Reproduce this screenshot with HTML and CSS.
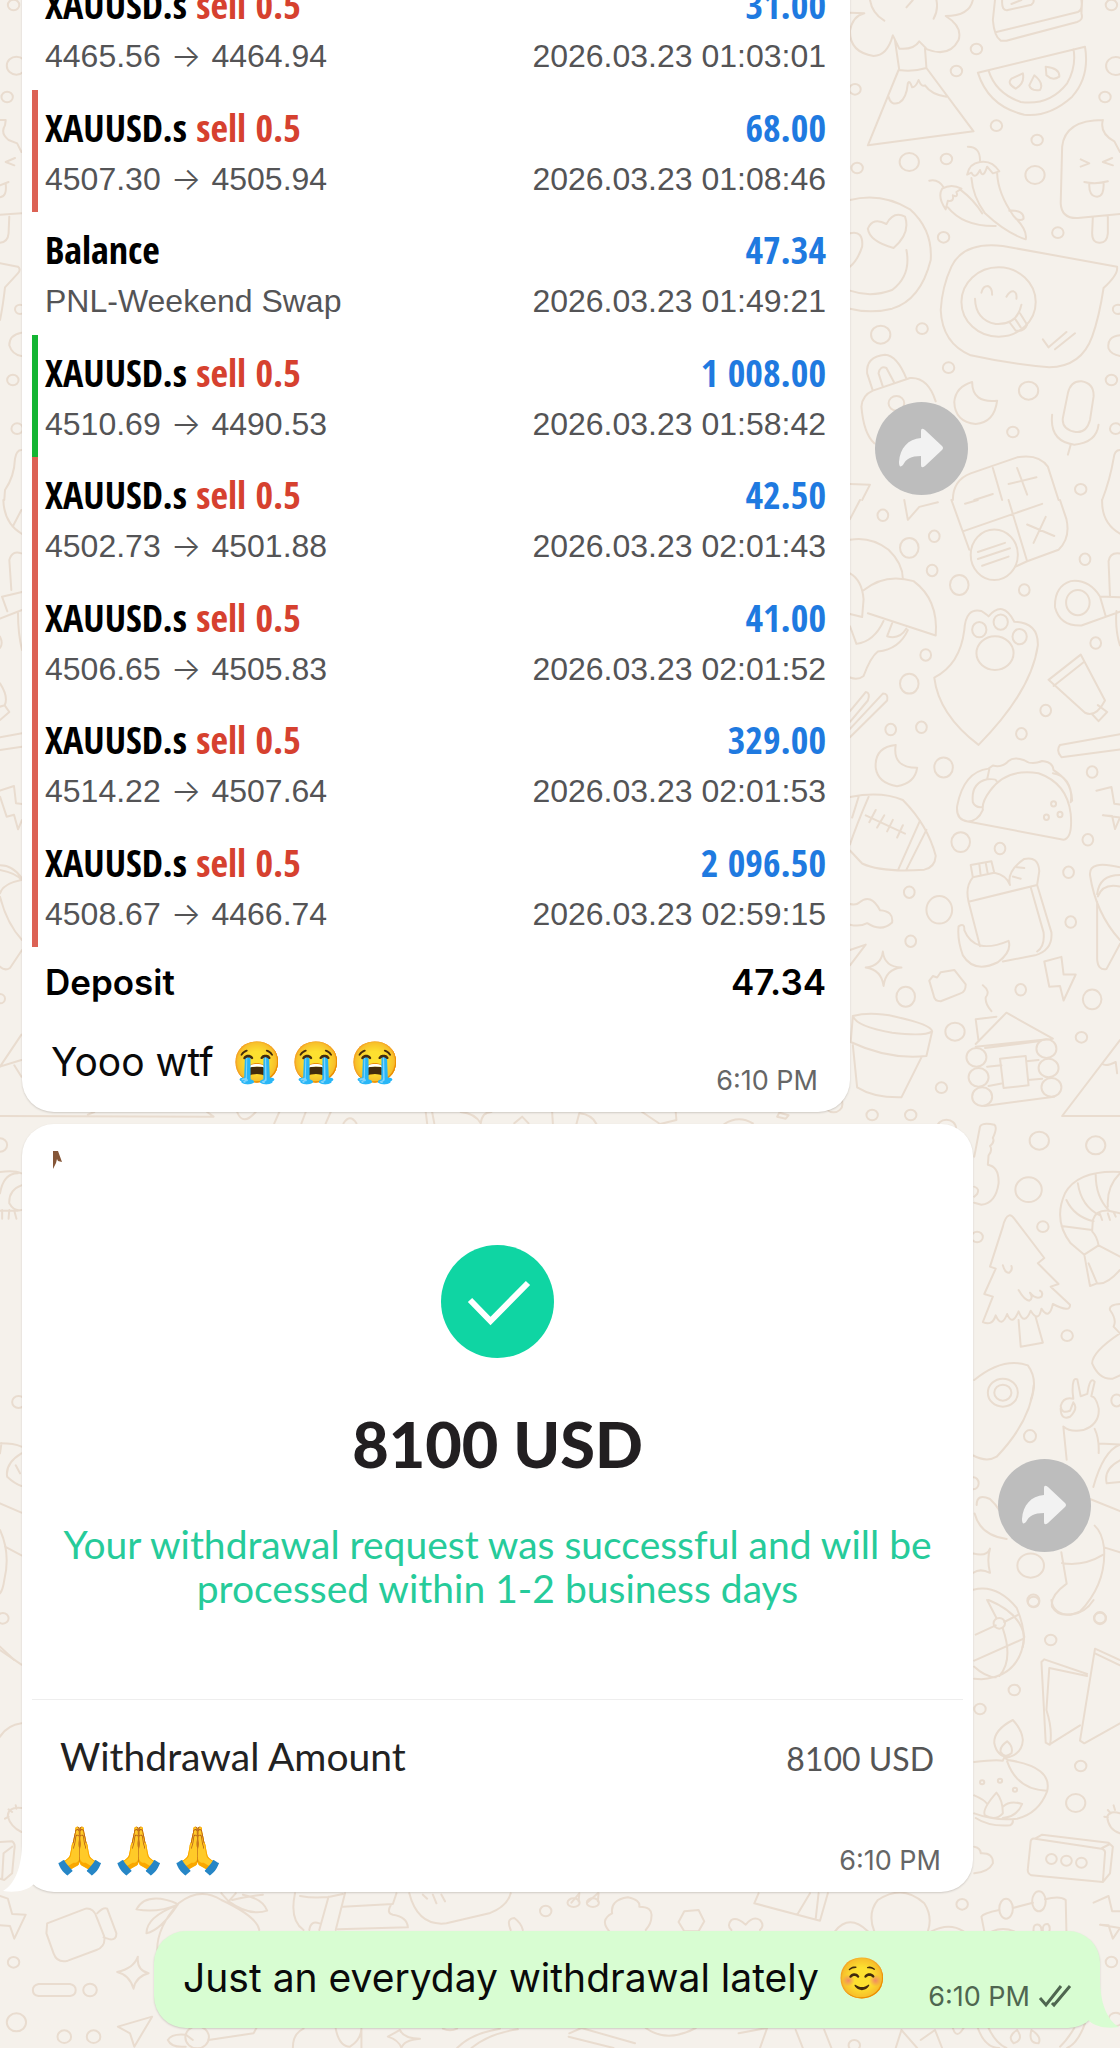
FILE: index.html
```html
<!DOCTYPE html>
<html lang="en">
<head>
<meta charset="utf-8">
<meta name="viewport" content="width=device-width, initial-scale=1">
<title>Chat</title>
<link rel="stylesheet" href="styles.css">
</head>
<body>
<div class="page">
<svg class="wallpaper" viewBox="0 0 1120 2048" aria-hidden="true">
  <!-- right side, top -->
  <g transform="translate(560 0) scale(.35714 .33333)">
    <path d="M868 0Q874 40 908 62M1054 0Q1060 30 1046 56M970 22L988 0M1156 0Q1146 48 1080 48Q1128 80 1116 120Q1090 174 1028 148L1006 124Q990 150 950 146L932 106Q916 168 878 168Q810 156 812 92Q820 48 852 40L812 38M938 122L950 210Q988 216 1026 204L1022 146M948 210L862 436L1158 394L1026 204M920 290Q926 318 950 308Q970 296 974 250Q978 238 986 262Q996 262 1004 240Q1012 262 1022 256Q1040 284 1082 290"/>
    <path d="M1218 0L1212 60Q1216 110 1234 122L1250 122L1448 66Q1466 60 1460 40L1462 0M1222 96L1450 36Q1464 30 1460 0M1238 0Q1236 34 1254 30L1320 14Q1328 8 1326 0M1264 12L1292 0"/>
    <path d="M1170 218L1470 140Q1484 230 1434 290Q1370 352 1300 344Q1200 320 1170 218ZM1200 212Q1220 280 1290 306Q1370 318 1420 250Q1446 200 1438 148M1296 220Q1302 250 1276 266Q1250 250 1264 236ZM1328 226Q1356 250 1344 270Q1318 274 1314 256ZM1360 200Q1400 204 1398 230Q1380 244 1362 226Z"/>
    <path d="M1142 440Q1178 440 1176 486M1034 542Q1060 536 1074 562M1230 514Q1210 480 1176 486Q1146 490 1140 524L1152 518Q1162 540 1176 510Q1184 540 1196 500L1212 520ZM1152 534Q1156 590 1190 640Q1250 700 1304 718Q1310 690 1270 648Q1226 580 1224 520M1124 566Q1096 550 1070 566Q1056 590 1080 628L1086 602Q1104 606 1100 586Q1116 594 1110 576ZM1086 622Q1130 680 1220 678M1120 568Q1160 600 1182 640M1258 632Q1300 630 1298 656Q1290 664 1276 656"/>
    <path d="M812 600Q900 576 980 628Q1044 690 1038 780Q1010 900 930 926Q870 942 812 926M934 744Q866 724 862 686Q876 650 914 672Q934 632 966 650Q982 700 934 744ZM812 700Q850 690 846 740Q834 780 812 800M970 750Q984 826 930 870Q870 894 812 872"/>
    <path d="M1520 360Q1414 360 1406 440L1402 610Q1404 656 1450 654L1568 642M1520 360Q1510 400 1552 424L1568 456M1458 478L1482 490L1458 500M1546 474L1520 486L1548 496M1468 546Q1500 554 1534 544M1482 550Q1480 590 1504 590Q1524 590 1522 548M1492 650L1490 700Q1490 730 1512 728Q1532 728 1534 700L1534 646"/>
    <path d="M1560 800L1240 738Q1130 724 1096 800Q1070 860 1066 930Q1070 1030 1150 1066Q1260 1092 1370 1102Q1460 1100 1490 1010Q1510 950 1522 864Q1560 826 1560 806ZM1180 878Q1184 858 1198 858Q1210 862 1210 884M1250 890Q1260 872 1270 874Q1280 878 1278 896M1162 896Q1164 960 1220 972Q1280 976 1292 914M1258 966L1276 992Q1300 996 1308 974L1288 940M1274 956L1290 982M1352 1018L1368 1042L1418 996M1386 1048L1442 1000"/>
    <circle cx="1228" cy="906" r="104"/>
    <path d="M876 1172L860 1120Q856 1070 910 1064Q944 1066 970 1136M904 1160L892 1120Q896 1096 914 1104L936 1148M844 1220Q846 1186 876 1172L980 1134Q1030 1130 1052 1204M844 1220Q850 1300 880 1330"/>
    <circle cx="942" cy="1210" r="22"/>
    <path d="M1154 1146Q1154 1210 1224 1202Q1216 1268 1164 1272Q1106 1266 1104 1206Q1108 1160 1154 1146ZM1422 1180Q1430 1142 1460 1144Q1496 1150 1494 1190L1484 1260Q1474 1300 1444 1296Q1404 1288 1408 1254ZM1378 1244Q1370 1324 1440 1334Q1502 1328 1508 1274M1430 1334L1422 1364M1100 1500Q1100 1440 1150 1420L1280 1372Q1340 1360 1366 1400L1396 1500M1212 1404L1238 1500M1256 1452L1334 1432M1280 1404L1308 1484M1160 1500L1212 1482M812 1452L868 1454L846 1500M1568 1350Q1552 1350 1550 1376Q1540 1440 1518 1500M1568 1006Q1530 1010 1536 1046Q1544 1064 1568 1068"/>
    <circle cx="826" cy="268" r="16"/><circle cx="1166" cy="147" r="16"/><circle cx="1110" cy="213" r="16"/><circle cx="1222" cy="377" r="16"/><circle cx="1336" cy="420" r="16"/><circle cx="1526" cy="291" r="16"/><circle cx="1544" cy="15" r="16"/><circle cx="1556" cy="198" r="27"/><circle cx="978" cy="486" r="27"/><circle cx="1082" cy="477" r="16"/><circle cx="832" cy="504" r="16"/><circle cx="1330" cy="525" r="27"/><circle cx="1074" cy="712" r="16"/><circle cx="1394" cy="698" r="16"/><circle cx="898" cy="1004" r="27"/><circle cx="1014" cy="986" r="16"/><circle cx="1088" cy="1103" r="16"/><circle cx="1312" cy="1172" r="27"/><circle cx="1544" cy="1140" r="16"/><circle cx="1268" cy="1296" r="16"/><circle cx="1556" cy="1286" r="16"/><circle cx="1458" cy="1468" r="16"/><circle cx="1562" cy="928" r="14"/>
  </g>
  <!-- right side, middle -->
  <g transform="translate(560 500) scale(.35714 .38265)">
    <path d="M1096 0L1146 130M1256 0L1308 160L1396 130Q1430 100 1418 50L1400 0M1128 82L1350 10M1308 64L1384 94M1360 44L1326 112M1276 174L1308 160M1134 10L1170 0M812 50L840 0M964 0L974 52L1006 18L1058 6M1518 0Q1516 60 1568 88"/>
    <circle cx="1216" cy="143" r="66"/>
    <path d="M1170 136L1246 112M1170 154L1260 126M1182 172L1256 148M812 104Q870 94 920 130Q960 166 960 206M812 192Q846 210 850 260L846 306L812 298M850 236Q910 190 990 212Q1060 260 1052 354L862 296M906 316Q880 370 830 376L812 330M930 322L916 356Q950 366 970 336M974 340Q950 390 890 396Q870 410 850 460Q834 472 812 464M812 552L856 502Q870 504 862 524L812 580M812 598L904 506Q920 506 916 524L812 620"/>
    <path d="M1172 640Q1060 560 1048 464Q1120 430 1132 340Q1136 280 1180 290Q1196 300 1200 304Q1240 260 1272 318Q1340 320 1338 380Q1320 500 1172 640Z"/><ellipse cx="1218" cy="400" rx="52" ry="44"/><circle cx="1174" cy="339" r="20"/><circle cx="1234" cy="319" r="20"/><circle cx="1287" cy="357" r="20"/>
    <path d="M1568 254L1512 252Q1480 206 1430 212Q1384 226 1386 280Q1400 330 1460 328L1568 292M1512 252L1528 304M1540 252L1536 160Q1540 136 1568 140M1558 290Q1554 340 1568 380M1458 404L1368 470L1470 556Q1500 570 1526 524ZM1466 424L1382 486M1506 536L1532 554L1508 578L1490 560M1568 612L1400 640Q1388 656 1404 672L1568 652"/><circle cx="1450" cy="268" r="33"/>
    <path d="M940 640Q880 646 884 700Q890 740 944 748Q994 740 1000 700Q930 700 940 640ZM812 776Q900 760 960 784Q1030 850 1052 930Q1050 960 1020 966Q900 974 846 950L812 916M864 776Q830 850 812 900M836 776L818 830M1008 838L948 964M1026 862L970 966M856 824L966 872M884 810L866 842M908 824L888 856M932 836L916 866M960 850L944 882"/>
    <path d="M1142 840Q1108 836 1112 800Q1130 710 1200 702L1212 694Q1240 700 1256 682Q1270 670 1300 680Q1320 694 1350 682Q1380 684 1382 706Q1440 740 1430 790M1142 840L1410 888Q1436 884 1430 820Q1420 740 1340 714Q1250 700 1204 760Q1180 790 1184 810Q1170 840 1142 840ZM1202 704L1196 730Q1220 728 1222 734M1196 730Q1150 740 1156 790Q1164 806 1184 802M1380 714Q1430 720 1434 786"/><circle cx="1382" cy="794" r="7"/><circle cx="1400" cy="822" r="7"/><circle cx="1362" cy="829" r="7"/>
    <path d="M1156 986L1150 954L1208 944L1216 974ZM1174 950L1178 982M1192 948L1198 978M1156 986Q1134 1010 1144 1050L1176 1166M1216 974Q1250 980 1260 1006M1260 1006Q1250 970 1300 938Q1340 930 1342 970L1336 1006M1280 960L1300 962M1268 984L1290 990M1144 1050L1336 1006L1376 1130Q1380 1176 1330 1190L1240 1206M1318 1012L1354 1130Q1358 1166 1336 1180M1116 1114Q1134 1104 1132 1124Q1160 1190 1256 1152Q1266 1180 1226 1208Q1160 1238 1128 1190Q1112 1150 1116 1114Z"/>
    <path d="M812 1056Q830 1060 838 1052Q870 1026 896 1072Q934 1074 930 1104Q900 1130 860 1106Q840 1116 812 1110M812 1176L856 1162L812 1216M904 1180Q908 1220 956 1222Q912 1226 906 1270Q900 1228 856 1222Q900 1216 904 1180ZM1034 1256L1044 1244L1056 1248L1066 1234L1104 1228L1136 1266Q1136 1286 1120 1290L1066 1310Q1048 1310 1046 1294ZM1184 1268Q1206 1284 1192 1300Q1190 1316 1208 1336M1356 1206L1404 1194L1410 1240L1444 1240L1410 1308L1400 1270L1370 1272ZM1502 760L1544 750L1552 794L1568 796M1568 830L1554 860L1546 826L1520 824ZM1568 960Q1480 940 1484 980Q1500 1080 1568 1150M1568 980Q1510 980 1504 1030M1504 1050L1504 1200Q1506 1230 1530 1226L1568 1160M1568 1010Q1520 1000 1506 1036"/>
    <circle cx="904" cy="40" r="15"/><circle cx="978" cy="125" r="26"/><circle cx="1048" cy="95" r="15"/><circle cx="1042" cy="184" r="15"/><circle cx="1118" cy="222" r="26"/><circle cx="1300" cy="235" r="15"/><circle cx="1470" cy="155" r="15"/><circle cx="1500" cy="374" r="15"/><circle cx="1024" cy="405" r="15"/><circle cx="978" cy="480" r="26"/><circle cx="1360" cy="550" r="15"/><circle cx="926" cy="600" r="15"/><circle cx="1012" cy="594" r="15"/><circle cx="1292" cy="611" r="15"/><circle cx="1074" cy="699" r="26"/><circle cx="1490" cy="711" r="15"/><circle cx="1122" cy="894" r="26"/><circle cx="1232" cy="911" r="15"/><circle cx="1478" cy="888" r="15"/><circle cx="1424" cy="973" r="15"/><circle cx="978" cy="1025" r="15"/><circle cx="1062" cy="1071" r="36"/><circle cx="982" cy="1153" r="15"/><circle cx="1430" cy="1103" r="15"/><circle cx="968" cy="1298" r="26"/><circle cx="1290" cy="1280" r="15"/><circle cx="1490" cy="1305" r="26"/>
  </g>
  <!-- right side, from the flower pot down to the tree -->
  <g transform="translate(560 1000) scale(.35714 .33333)">
    <path d="M820 48Q870 34 940 50Q1040 74 1042 94Q1020 110 930 98Q830 80 820 48ZM820 48L814 126Q920 180 1026 168L1042 94M820 136L832 262Q880 294 956 292L1012 172M1164 132L1250 38L1380 116L1164 140M1222 50L1164 58L1172 124M1190 144L1340 124M1196 200L1236 196M1306 184L1340 180M1200 258L1240 250M1310 240L1350 236M1188 318L1384 290M1232 176L1304 168L1312 256L1242 264Z"/>
    <circle cx="1166" cy="172" r="28"/><circle cx="1172" cy="232" r="28"/><circle cx="1182" cy="290" r="28"/><circle cx="1362" cy="146" r="28"/><circle cx="1368" cy="204" r="28"/><circle cx="1376" cy="262" r="28"/>
    <path d="M1568 120L1406 348L1568 348M1518 192Q1530 200 1556 186L1560 220M1160 470L1176 380Q1182 366 1216 374Q1226 382 1212 414Q1218 426 1204 438Q1212 450 1200 466L1198 494Q1230 500 1228 550Q1220 610 1180 614L1160 608M1160 560Q1176 566 1168 582L1160 590"/>
    <path d="M1568 516Q1450 510 1414 580Q1380 660 1430 730L1468 764L1508 736M1508 736Q1504 710 1490 694L1492 660Q1500 630 1536 632L1568 640M1450 550Q1460 620 1512 646M1418 600Q1440 650 1494 664M1404 678L1490 690M1500 524Q1500 590 1536 630M1534 620Q1530 560 1568 520M1468 764L1484 858L1504 850L1480 790M1508 736L1568 770M1504 850Q1530 856 1568 810M1518 660L1512 642M1540 660L1534 640M1556 650L1550 636"/>
    <path d="M1258 646Q1246 650 1240 680L1204 800L1220 806L1188 882L1212 890L1184 966Q1210 980 1220 946Q1236 986 1252 942Q1266 980 1284 934Q1300 980 1318 932Q1340 970 1348 926Q1370 962 1380 912Q1430 940 1428 914L1374 860L1396 852L1338 790L1356 774L1272 656Q1264 644 1258 646ZM1240 796Q1246 820 1258 818Q1268 810 1264 798M1284 870Q1300 900 1314 902Q1326 896 1316 878Q1332 900 1348 890Q1354 878 1344 872M1284 960L1290 1040L1352 1028L1332 952M1568 912Q1536 914 1540 930Q1560 960 1550 980L1568 1000M1568 1000Q1490 1056 1490 1090Q1510 1140 1548 1136L1568 1126M1160 1140Q1240 1070 1310 1096Q1340 1140 1318 1200"/>
    <circle cx="1240" cy="1178" r="42"/><circle cx="1240" cy="1178" r="24"/>
    <circle cx="1106" cy="95" r="27"/><circle cx="1460" cy="112" r="16"/><circle cx="1068" cy="263" r="16"/><circle cx="874" cy="345" r="16"/><circle cx="982" cy="345" r="16"/><circle cx="766" cy="312" r="25"/><circle cx="1082" cy="386" r="27"/><circle cx="1342" cy="422" r="27"/><circle cx="1500" cy="436" r="27"/><circle cx="1312" cy="569" r="37"/><circle cx="1352" cy="680" r="16"/><circle cx="1168" cy="711" r="16"/><circle cx="1420" cy="1007" r="16"/>
    <path d="M46 372L54 340Q90 344 102 372M230 336L280 372L326 360L324 336M460 372Q500 344 540 370M608 350L614 338L640 346L632 356Z"/>
  </g>
  <!-- right side, around the second share button -->
  <g transform="translate(840 1100) scale(.33333 .60459)">
    <path d="M582 470Q574 530 470 590Q440 600 400 588M670 540L680 595M776 584Q778 560 764 544M670 540Q690 550 730 546Q780 536 776 510Q768 490 754 490L764 466Q750 456 742 486L722 490L712 462Q696 458 698 484L700 494Q670 490 662 506Q664 520 690 514L700 500Q716 510 690 524Q662 530 662 510M760 640Q790 580 840 570L776 568M750 660L840 680M800 634Q790 610 840 596M800 634L840 632M410 670Q410 650 450 660Q490 680 510 720M404 684Q420 720 500 726M400 750Q440 756 450 742Q440 760 450 782Q420 774 400 782M664 748L680 800Q630 820 636 838Q660 860 720 846Q800 800 792 740Q786 715 764 704M666 766Q730 772 790 752M792 740L840 748M400 810Q470 800 530 840Q560 880 548 905"/>
    <ellipse cx="570" cy="556" rx="18" ry="10"/><ellipse cx="830" cy="497" rx="16" ry="10"/><ellipse cx="572" cy="770" rx="40" ry="20"/><ellipse cx="580" cy="828" rx="18" ry="10"/><ellipse cx="780" cy="857" rx="18" ry="10"/><ellipse cx="400" cy="634" rx="16" ry="10"/>
  </g>
  <!-- right side, bottom -->
  <g transform="translate(560 1600) scale(.35714 .33333)">
    <path d="M1200 0Q1290 40 1300 110Q1290 230 1180 238L1160 236M1164 104L1220 76M1244 66L1284 44M1196 0L1222 54M1240 86Q1270 180 1230 228M1160 182L1298 116M1160 200Q1190 230 1220 232M1376 0Q1380 44 1430 44Q1470 40 1494 0M1568 180L1498 146L1456 422L1468 430L1568 370M1498 160L1568 196M1476 222L1356 178L1348 186L1360 428L1370 434L1456 376M1476 228L1370 204L1362 330M1372 434Q1380 390 1362 330"/>
    <circle cx="1230" cy="70" r="16"/>
    <path d="M1268 360Q1214 390 1216 430Q1224 470 1256 472Q1294 460 1296 420Q1294 390 1268 360ZM1252 424Q1230 440 1234 456Q1246 476 1264 460Q1270 440 1252 424ZM1160 486Q1220 478 1240 482L1244 472L1254 480Q1380 500 1364 574Q1340 640 1280 656Q1220 664 1160 640M1252 484Q1280 570 1364 572M1160 586Q1190 600 1196 612M1222 578Q1180 630 1190 646Q1220 664 1240 640Q1240 600 1222 578ZM1240 620Q1260 600 1294 612Q1280 650 1240 654M1164 654Q1200 680 1260 676Q1270 670 1268 658M1160 740Q1178 744 1178 760Q1214 758 1212 790Q1200 816 1160 820"/><circle cx="1182" cy="547" r="6"/><circle cx="1232" cy="542" r="6"/><circle cx="1274" cy="569" r="6"/>
    <path d="M1330 716L1350 704L1536 728L1548 740L1540 820L1520 846L1320 826Q1308 820 1310 806L1318 724Q1320 714 1330 716L1516 746Q1528 750 1526 760L1520 846M1518 744L1540 732M1568 640Q1540 630 1532 650Q1536 690 1568 700M1524 650L1534 652M1534 630L1542 640M1550 616L1554 630M1494 908L1536 888L1546 934L1568 934M1568 984L1548 1016L1536 976L1512 974Z"/><circle cx="1376" cy="777" r="15"/><circle cx="1418" cy="782" r="15"/><circle cx="1460" cy="788" r="15"/>
    <path d="M1188 994L1180 950Q1184 940 1230 930M1268 924L1324 908M1358 898Q1400 886 1416 900L1418 994M1326 994Q1324 970 1340 974Q1350 980 1348 994M1352 994Q1350 970 1366 972Q1374 980 1370 994M1210 994Q1240 980 1272 994"/><ellipse cx="1249" cy="926" rx="19" ry="30"/><ellipse cx="1341" cy="904" rx="19" ry="30"/>
    <path d="M32 908L54 880M78 906L106 880M54 880L52 904M108 880L106 904M138 994Q110 960 146 940Q140 900 190 892Q226 900 222 920Q260 920 256 950Q256 970 240 990M348 934L388 930L404 964L388 994L348 994L332 966ZM480 990Q466 976 480 960Q494 950 520 974Q540 946 560 960Q574 976 560 990M556 880L544 910L728 962L750 880M700 880L664 944M724 880L716 956M880 994Q860 940 890 900Q960 850 1020 910Q1044 950 1030 994M770 994Q810 940 862 994M1040 994Q1090 966 1130 994"/>
    <ellipse cx="38" cy="908" rx="17" ry="13"/><ellipse cx="92" cy="908" rx="17" ry="13"/>
    <path d="M26 1300L60 1284L210 1330M24 1310L150 1344M240 1284Q300 1330 380 1284M500 1300L580 1284L560 1344M660 1290L680 1344M740 1290L760 1344M940 1344L956 1290L1000 1344M1010 1320L1050 1290L1070 1344M1100 1284Q1110 1320 1130 1284M1170 1284Q1190 1344 1230 1344M1470 1270Q1450 1330 1420 1344M1200 1284Q1220 1330 1250 1344M1440 1284Q1420 1320 1400 1340M1280 1290Q1300 1320 1270 1330Q1250 1310 1280 1290ZM1320 1290Q1350 1310 1340 1330Q1310 1330 1320 1290Z"/>
    <circle cx="1326" cy="6" r="16"/><circle cx="1374" cy="120" r="16"/><circle cx="1512" cy="54" r="16"/><circle cx="1272" cy="270" r="16"/><circle cx="1176" cy="327" r="16"/><circle cx="1458" cy="498" r="16"/><circle cx="1444" cy="609" r="27"/><circle cx="1126" cy="913" r="16"/><circle cx="1544" cy="1086" r="16"/><circle cx="1556" cy="1258" r="20"/><circle cx="824" cy="1336" r="16"/>
  </g>
  <!-- left side, bottom -->
  <g transform="translate(0 1640) scale(.35714 .33333)">
    <path d="M0 30L60 74M0 290Q20 256 60 250M60 504Q20 500 22 530Q30 560 60 576M14 536L24 530M24 508L34 516M44 496L46 506M0 606L34 604Q44 610 40 630L34 700L12 720L0 716M10 640L34 620M10 640L6 716M0 768L22 776L34 822L72 824L40 896L28 858L0 856M132 850L240 806Q262 804 270 830L292 890Q296 920 270 930L190 962Q160 970 150 940L130 880ZM272 820Q290 800 300 806L326 880Q326 900 308 898L290 892M386 950Q382 990 416 1000Q380 1010 374 1046Q362 1004 328 996Q374 986 386 950ZM108 1032L196 1032Q212 1036 212 1050Q212 1066 196 1068L108 1068Q92 1066 92 1050Q92 1036 108 1032ZM330 1160L426 1130L376 1220L364 1180Z"/>
    <path d="M440 930Q440 860 500 790Q560 740 620 780Q720 830 726 870M382 808Q400 770 450 776Q490 784 498 794Q440 820 382 808ZM410 880Q410 830 496 796M410 880Q450 870 496 796M640 784Q700 830 748 812Q736 776 680 764M620 760L640 784L660 760M650 780Q690 770 736 764M826 760Q810 840 850 870M840 768Q900 780 960 762M920 770L894 870M966 760L940 870M960 800L1100 792L1110 760M1096 792Q1080 820 1100 824Q1140 830 1142 862L946 868M866 870Q870 840 894 850M1146 760Q1170 860 1250 850L1370 820Q1420 800 1430 760M1184 764L1196 776M1212 764L1222 790M1236 764L1246 784M1430 870Q1416 836 1440 834Q1460 850 1464 870M470 1200Q480 1180 520 1184L540 1200M470 1200Q480 1224 520 1220M584 1200L710 1180L718 1164M820 1224Q820 1180 850 1166M940 1166Q950 1220 980 1220Q1010 1200 1012 1166L1012 1224M1120 1170Q1130 1196 1176 1196Q1130 1200 1124 1224Q1116 1200 1086 1190ZM1280 1224Q1320 1180 1400 1166M1320 1224Q1370 1180 1450 1168M1240 1166Q1260 1176 1280 1166"/>
    <circle cx="552" cy="1192" r="33"/><circle cx="38" cy="967" r="16"/><circle cx="252" cy="1050" r="19"/><circle cx="46" cy="1147" r="27"/><circle cx="180" cy="1190" r="19"/><circle cx="262" cy="1190" r="19"/><circle cx="1528" cy="813" r="16"/>
  </g>
  <!-- left side, top -->
  <g transform="scale(.35714 .33333)">
    <path d="M0 360L16 360L14 376M14 376Q0 400 24 420L48 430L60 456M42 474L16 486L40 496M0 556L24 546M16 552Q20 590 0 592M0 644L60 640M26 650L24 700Q22 726 0 728M0 790L50 800Q60 808 50 820L14 862Q8 920 0 960M60 998Q26 1004 26 1036Q34 1064 60 1068M60 1350Q46 1350 42 1376Q40 1430 14 1470L12 1500"/>
    <circle cx="38" cy="15" r="16"/><circle cx="46" cy="197" r="27"/><circle cx="20" cy="291" r="16"/><circle cx="56" cy="928" r="14"/><circle cx="36" cy="1140" r="16"/><circle cx="48" cy="1286" r="16"/>
  </g>
  <!-- left side, middle -->
  <g transform="translate(0 500) scale(.33333)">
    <path d="M10 0Q12 70 66 102M64 30L38 80M34 270L28 180Q36 150 64 160M6 290L66 276M6 290L22 334M0 356L66 330M54 340Q54 400 66 450M0 410Q10 430 0 444M0 550Q26 590 14 616L0 620M14 616L28 636L0 660M0 712L66 700M0 750L66 740M0 872L42 858L48 910L66 912M66 960L54 988L42 944L20 950L0 890M0 1096Q40 1096 66 1136M0 1110Q50 1120 64 1140Q10 1150 0 1180M0 1190Q20 1270 66 1320M66 1350L30 1404Q14 1414 0 1400"/>
  </g>
  <g transform="translate(0 940) scale(.35714 .33333)">
    <path d="M0 380L60 284M0 380L60 360M40 376L60 410M0 528L598 530L580 516M246 524L264 516M664 516Q680 560 716 516M768 550L782 516M844 550L856 516M912 550L926 516M962 550Q980 520 998 550M1192 516L1196 550M1210 516L1216 550M1290 516Q1330 520 1346 550Q1350 516 1376 516M1440 550L1462 530L1480 550M1546 516L1548 550M0 696Q40 690 60 700M0 760Q10 700 50 700M60 736Q24 750 26 790Q40 816 60 810M6 836L6 810M24 836L26 810M46 836L40 812M0 812L50 812"/>
    <circle cx="0" cy="176" r="14"/><circle cx="0" cy="615" r="20"/>
  </g>
  <g transform="translate(0 1400) scale(.35714 .33333)">
    <path d="M0 130Q40 130 60 140M60 160Q14 190 20 230Q40 250 60 258M44 196L56 220M0 160L4 130M0 310L60 338M0 390Q30 460 12 540Q8 570 0 580M14 440L60 466M0 740L40 780"/>
    <circle cx="52" cy="6" r="18"/><circle cx="8" cy="655" r="16"/>
  </g>
</svg>

<main class="chat">
  <article class="message">
    <div class="bubble bubble--statement">
      <ul class="deals">
        <li class="deal"><strong class="deal-name">XAUUSD.s <span class="side">sell 0.5</span></strong><strong class="profit">31.00</strong><span class="detail">4465.56 <span class="arrow">→</span> 4464.94</span><time class="detail">2026.03.23 01:03:01</time></li>
        <li class="deal deal--loss"><strong class="deal-name">XAUUSD.s <span class="side">sell 0.5</span></strong><strong class="profit">68.00</strong><span class="detail">4507.30 <span class="arrow">→</span> 4505.94</span><time class="detail">2026.03.23 01:08:46</time></li>
        <li class="deal"><strong class="deal-name">Balance</strong><strong class="profit">47.34</strong><span class="detail">PNL-Weekend Swap</span><time class="detail">2026.03.23 01:49:21</time></li>
        <li class="deal deal--gain"><strong class="deal-name">XAUUSD.s <span class="side">sell 0.5</span></strong><strong class="profit">1 008.00</strong><span class="detail">4510.69 <span class="arrow">→</span> 4490.53</span><time class="detail">2026.03.23 01:58:42</time></li>
        <li class="deal deal--loss"><strong class="deal-name">XAUUSD.s <span class="side">sell 0.5</span></strong><strong class="profit">42.50</strong><span class="detail">4502.73 <span class="arrow">→</span> 4501.88</span><time class="detail">2026.03.23 02:01:43</time></li>
        <li class="deal deal--loss"><strong class="deal-name">XAUUSD.s <span class="side">sell 0.5</span></strong><strong class="profit">41.00</strong><span class="detail">4506.65 <span class="arrow">→</span> 4505.83</span><time class="detail">2026.03.23 02:01:52</time></li>
        <li class="deal deal--loss"><strong class="deal-name">XAUUSD.s <span class="side">sell 0.5</span></strong><strong class="profit">329.00</strong><span class="detail">4514.22 <span class="arrow">→</span> 4507.64</span><time class="detail">2026.03.23 02:01:53</time></li>
        <li class="deal deal--loss"><strong class="deal-name">XAUUSD.s <span class="side">sell 0.5</span></strong><strong class="profit">2 096.50</strong><span class="detail">4508.67 <span class="arrow">→</span> 4466.74</span><time class="detail">2026.03.23 02:59:15</time></li>
      </ul>
      <div class="deposit"><span>Deposit</span><span>47.34</span></div>
      <div class="caption">
        <p class="text">Yooo wtf <span class="emojis"><span>😭</span><span>😭</span><span>😭</span></span></p>
        <time class="stamp">6:10 PM</time>
      </div>
    </div>
    <button class="share" type="button" aria-label="Forward">
      <svg class="share-icon" viewBox="0 0 93 93" aria-hidden="true"><path d="M46 29Q46 25 50 28L67 44Q69 46 67 48L50 64Q46 67 46 63V54C36 54 31 57 28 63Q24 67 24 60C25 46 33 37 46 36Z"/></svg>
    </button>
  </article>

  <article class="message">
    <div class="bubble bubble--receipt">
      <svg class="avatar" viewBox="0 0 9 18" aria-hidden="true"><path d="M0 0H5L9 11L5 10L4 8L3 12L0 18Z"/></svg>
      <div class="receipt">
        <svg class="success" viewBox="0 0 113 113" role="img" aria-label="Success"><circle cx="56.500" cy="56.500" r="56.500"/><path d="M29 55L49.500 76L87 38"/></svg>
        <h2 class="amount">8100 USD</h2>
        <p class="notice">Your withdrawal request was successful and will be processed within 1-2 business days</p>
      </div>
      <dl class="summary"><dt>Withdrawal Amount</dt><dd>8100 USD</dd></dl>
      <div class="caption">
        <p class="text text--hands"><span class="emojis"><span>🙏</span><span>🙏</span><span>🙏</span></span></p>
        <time class="stamp">6:10 PM</time>
      </div>
      <svg class="tail tail--left" viewBox="0 0 32 50" aria-hidden="true"><path d="M19 0C19 25 12 42 0 49C12 51 24 49 31 42V0Z"/></svg>
    </div>
    <button class="share" type="button" aria-label="Forward">
      <svg class="share-icon" viewBox="0 0 93 93" aria-hidden="true"><path d="M46 29Q46 25 50 28L67 44Q69 46 67 48L50 64Q46 67 46 63V54C36 54 31 57 28 63Q24 67 24 60C25 46 33 37 46 36Z"/></svg>
    </button>
  </article>

  <article class="message message--own">
    <div class="bubble bubble--own">
      <div class="caption">
        <p class="text">Just an everyday withdrawal lately <span class="emojis"><span>☺️</span></span></p>
        <div class="status">
          <time class="stamp">6:10 PM</time>
          <svg class="ticks" viewBox="0 0 34 32" role="img" aria-label="Delivered"><path d="M2 17L8 24L23 5M14 22L16 24L32 5"/></svg>
        </div>
      </div>
      <svg class="tail tail--right" viewBox="0 0 32 50" aria-hidden="true"><path d="M13 0C13 25 20 42 32 49C20 51 8 49 1 42V0Z"/></svg>
    </div>
  </article>
</main>
</div>
</body>
</html>
```
FILE: styles.css
```css
* {
  box-sizing: border-box;
}

body {
  margin: 0;
  background: #f5f1eb;
  font-family: Inter, "Liberation Sans", sans-serif;
  color: #0a0a0a;
}

p, h2, ul, dl, dd {
  margin: 0;
  padding: 0;
}

.page {
  position: relative;
  overflow: hidden;
}

.wallpaper {
  position: absolute;
  top: 0;
  left: 0;
  width: 100%;
  height: auto;
  fill: none;
  stroke: #e9dccf;
  stroke-width: 2;
  stroke-linecap: round;
  stroke-linejoin: round;
}

.wallpaper * {
  vector-effect: non-scaling-stroke;
}

/* The thread is scrolled: its first message starts above the window. */
.chat {
  position: relative;
  display: flex;
  flex-direction: column;
  gap: 12px;
  margin-top: -210px;
  padding: 0 20px 20px 22px;
}

.message {
  display: flex;
  align-items: center;
  gap: 25px;
}

.message--own {
  justify-content: flex-end;
  margin-top: 27px;
}

.bubble {
  position: relative;
  min-width: 0;
  border-radius: 32px;
  background: #fff;
  box-shadow: 0 1px 2px rgba(60, 50, 40, 0.2);
}

.bubble--statement {
  flex: 0 1 828px;
  padding-top: 177px;
}

.bubble--receipt {
  flex: 0 1 951px;
  padding-top: 27px;
}

.bubble--own {
  flex: 0 1 946px;
  padding-top: 23px;
  background: #d8fdd2;
}

.deals {
  display: grid;
  grid-auto-rows: 123px 122px;
  padding: 0 10px;
  list-style: none;
}

.deal {
  display: grid;
  grid-template-columns: 1fr auto;
  grid-template-rows: 48px 44px;
  row-gap: 6px;
  padding: 13px 14px 0 7px;
  border-left: 6px solid transparent;
}

.deal--loss {
  border-color: #dc6255;
}

.deal--gain {
  border-color: #14b533;
}

.deal-name,
.profit {
  font: 700 38px/48px "Open Sans Condensed", "Roboto Condensed", "Liberation Sans", sans-serif;
  color: #000;
}

.deal-name .side {
  color: #d6412f;
}

.profit {
  text-align: right;
  color: #1f7ae0;
}

.detail {
  font: 32px/44px "Liberation Sans", Arial, sans-serif;
  color: #545456;
}

.arrow {
  display: inline-block;
  width: 33px;
  text-align: center;
  font-family: Inter, "DejaVu Sans", sans-serif;
  font-weight: 300;
}

.deposit {
  display: flex;
  justify-content: space-between;
  padding: 11px 24px 0 23px;
  font-size: 35px;
  font-weight: 600;
  line-height: 48px;
  color: #000;
}

.caption {
  display: flex;
  justify-content: space-between;
  align-items: flex-end;
  padding: 0 32px 15px 29px;
}

.bubble--statement .caption {
  padding-top: 32px;
}

.bubble--receipt .caption {
  padding-top: 45px;
}

.bubble--own .caption {
  padding-right: 28px;
}

.text {
  display: flex;
  align-items: center;
  gap: 18px;
  margin-bottom: 11px;
  font-size: 39px;
  line-height: 48px;
}

.emojis {
  display: flex;
  gap: 9px;
  font-size: 40px;
}

.text--hands {
  margin-bottom: 4px;
}

.text--hands .emojis {
  gap: 2px;
  font-size: 46px;
}

.stamp {
  font-size: 27px;
  line-height: 32px;
  color: #666;
}

.status {
  display: flex;
  gap: 8px;
}

.bubble--own .stamp {
  color: #4f6650;
}

.ticks {
  width: 34px;
  height: 32px;
  fill: none;
  stroke: #4f6650;
  stroke-width: 3;
}

.share {
  flex: none;
  width: 93px;
  height: 93px;
  margin: 0 0 6px;
  padding: 0;
  border: 0;
  border-radius: 50%;
  background: #bdbdbd;
}

.share-icon {
  display: block;
  fill: #f2f2f2;
}

.avatar {
  display: block;
  width: 9px;
  height: 18px;
  margin-left: 31px;
  fill: #855638;
}

.receipt {
  padding: 76px 30px 89px;
  text-align: center;
  font-family: Lato, "Open Sans", sans-serif;
}

.success {
  display: block;
  width: 113px;
  height: 113px;
  margin: 0 auto;
  fill: #0fd5a3;
}

.success path {
  fill: none;
  stroke: #fff;
  stroke-width: 6;
}

.amount {
  margin-top: 50px;
  font-size: 63px;
  font-weight: 900;
  line-height: 72px;
  color: #221f21;
}

.notice {
  margin-top: 42px;
  font-size: 39px;
  line-height: 44px;
  color: #26cb9a;
}

.summary {
  display: flex;
  justify-content: space-between;
  align-items: baseline;
  margin: 0 10px;
  padding: 32px 29px 0 28px;
  border-top: 1px solid #eee;
  font: 39px/48px Lato, "Open Sans", sans-serif;
  color: #222;
}

.summary dd {
  font-size: 32px;
  line-height: 40px;
  color: #555;
}

.tail {
  position: absolute;
  bottom: 0;
  width: 32px;
  height: 50px;
  fill: #fff;
}

.tail--left {
  left: -19px;
}

.tail--right {
  right: -19px;
  fill: #d8fdd2;
}
```
